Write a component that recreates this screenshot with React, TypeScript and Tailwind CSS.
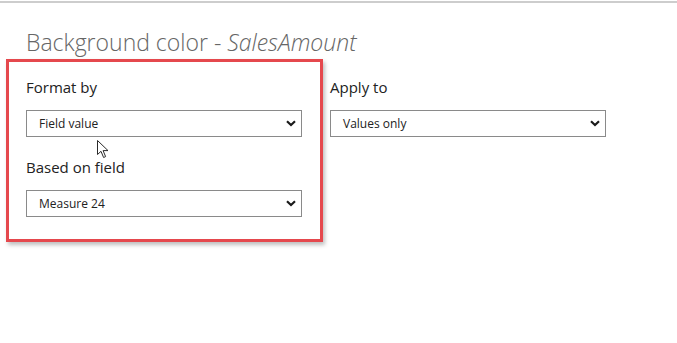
const FONT = { fontFamily: '"Open Sans", "Noto Sans", sans-serif' };

function Chevron() {
  return (
    <svg width="10" height="7" viewBox="0 0 10 7" className="shrink-0">
      <path d="M1 1.2 L5 5 L9 1.2" fill="none" stroke="#1a1a1a" strokeWidth="2.2" />
    </svg>
  );
}

function Dropdown({ value }: { value: string }) {
  return (
    <div className="flex h-[27px] w-[276px] items-center justify-between border border-[#8a8a8a] bg-white pl-[12px] pr-[5px]">
      <span className="text-[12px] text-[#222]">{value}</span>
      <Chevron />
    </div>
  );
}

function Field({ label, value }: { label: string; value: string }) {
  return (
    <div className="flex flex-col">
      <div className="h-[24px] text-[15px] leading-[24px] text-[#222]">{label}</div>
      <div className="mt-[11px]">
        <Dropdown value={value} />
      </div>
    </div>
  );
}

export default function App() {
  return (
    <div className="relative h-[343px] w-[677px] overflow-hidden bg-white" style={FONT}>
      <div className="pt-px">
        <div className="h-[2px] bg-[#cdcdcd]" />
      </div>

      <div className="pl-[26px] pt-[23px]">
        <h1 className="h-[32px] text-[23px] font-light leading-[32px] text-[#666]">
          Background color - <i className="italic">SalesAmount</i>
        </h1>

        <div className="mt-[17px] flex gap-[28px]">
          <div className="flex flex-col gap-[18px]">
            <Field label="Format by" value="Field value" />
            <Field label="Based on field" value="Measure 24" />
          </div>
          <Field label="Apply to" value="Values only" />
        </div>
      </div>

      {/* red highlight annotation */}
      <div className="pointer-events-none absolute left-[6px] top-[59px] h-[183px] w-[317px] border-[3px] border-[#e5484d] shadow-[2px_3px_4px_rgba(0,0,0,0.25)]" />

      {/* mouse cursor */}
      <svg className="absolute left-[97px] top-[140px]" width="13" height="19" viewBox="0 0 13 19">
        <path d="M0.5 0.5 L0.5 14.5 L4 11.3 L6.6 17.5 L8.6 16.6 L6.1 10.6 L11 10.6 Z" fill="white" stroke="#2a2a2a" strokeWidth="1" strokeLinejoin="round" />
      </svg>
    </div>
  );
}
